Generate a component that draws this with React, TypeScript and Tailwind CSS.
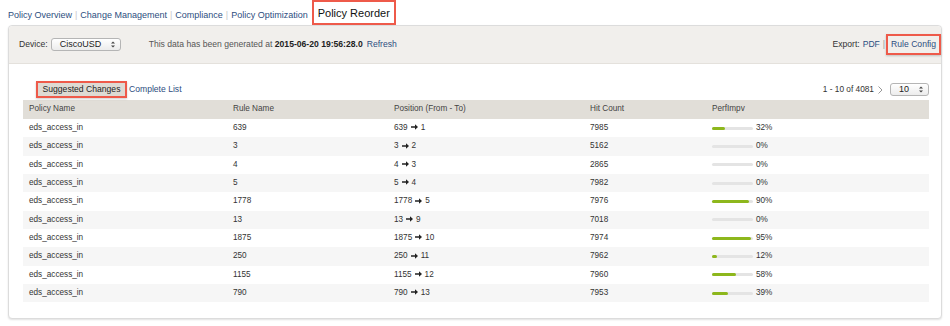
const rows = [
  { rule: "639", from: "639", to: "1", hits: "7985", perf: 32 },
  { rule: "3", from: "3", to: "2", hits: "5162", perf: 0 },
  { rule: "4", from: "4", to: "3", hits: "2865", perf: 0 },
  { rule: "5", from: "5", to: "4", hits: "7982", perf: 0 },
  { rule: "1778", from: "1778", to: "5", hits: "7976", perf: 90 },
  { rule: "13", from: "13", to: "9", hits: "7018", perf: 0 },
  { rule: "1875", from: "1875", to: "10", hits: "7974", perf: 95 },
  { rule: "250", from: "250", to: "11", hits: "7962", perf: 12 },
  { rule: "1155", from: "1155", to: "12", hits: "7960", perf: 58 },
  { rule: "790", from: "790", to: "13", hits: "7953", perf: 39 },
];

const navItems = ["Policy Overview", "Change Management", "Compliance", "Policy Optimization"];

function Updown() {
  return (
    <svg width="4" height="7" viewBox="0 0 4 7" className="shrink-0">
      <path d="M0 2.5 L2 0.5 L4 2.5 Z M0 4.5 L2 6.5 L4 4.5 Z" fill="#444" />
    </svg>
  );
}

function SelectBox({ label, className }: { label: string; className: string }) {
  return (
    <div
      className={`flex items-center justify-between rounded-[3px] border border-[#b5b5b5] bg-gradient-to-b from-white to-[#ececec] pl-[8px] pr-[5px] text-[9px] text-[#222] ${className}`}
    >
      <span>{label}</span>
      <Updown />
    </div>
  );
}

function Arrow() {
  return (
    <svg width="7" height="6" viewBox="0 0 7 6" className="mx-[3px] mb-[2px] shrink-0">
      <path d="M0 2.3 H4 V0.3 L7 3 L4 5.7 V3.7 H0 Z" fill="#222" />
    </svg>
  );
}

export default function App() {
  return (
    <div className="h-[326px] w-[950px] bg-white font-['Liberation_Sans',Arial,sans-serif] text-[#333]">
      {/* top tabs */}
      <div className="flex h-[25px] items-end pl-[8px]">
        <div className="flex items-center pb-[3px] text-[9px] text-[#2d4e80]">
          {navItems.map((item, i) => (
            <span key={item} className="flex items-center">
              <span>{item}</span>
              {i < navItems.length - 1 && <span className="mx-[3px] text-[#c8c8c8]">|</span>}
            </span>
          ))}
        </div>
        <div className="ml-[4px] flex h-[25px] items-center border-2 border-[#ee5a4a] px-[4px] pt-[1px] text-[11px] text-[#111]">
          Policy Reorder
        </div>
      </div>

      {/* panel */}
      <div className="mx-[8px] h-[294px] rounded-[4px] border border-[#dcdcdc] bg-white shadow-[0_1px_2px_rgba(0,0,0,0.12)]">
        <div className="flex h-[38px] items-center justify-between rounded-t-[4px] border-b border-[#e4e1dc] bg-[#f1efec] pl-[10px] text-[8.6px]">
          <div className="flex items-center">
            <span className="text-[#333]">Device:</span>
            <SelectBox label="CiscoUSD" className="ml-[3px] h-[13px] w-[70px]" />
            <span className="ml-[28px] text-[#555]">
              This data has been generated at{" "}
              <span className="font-bold text-[#222]">2015-06-20 19:56:28.0</span>
              <span className="ml-[4px] text-[#2d4e80]">Refresh</span>
            </span>
          </div>
          <div className="flex items-center">
            <span className="text-[#333]">Export:</span>
            <span className="ml-[3px] text-[#2d4e80]">PDF</span>
            <span className="ml-[3px] text-[#999]">|</span>
            <div className="ml-[1px] flex h-[21px] items-center border-2 border-[#ee5a4a] px-[3px] text-[#2d4e80] shadow-[0_1px_2px_rgba(0,0,0,0.2)]">
              Rule Config
            </div>
          </div>
        </div>

        <div className="px-[14px] pt-[17px] pr-[12px]">
          {/* tabs + pagination */}
          <div className="flex h-[17px] items-center justify-between">
            <div className="ml-[13px] flex items-center text-[8.6px]">
              <div className="flex h-[17px] w-[91px] items-center justify-center border-2 border-[#ee5a4a] bg-[#dedad3] text-[#222] shadow-[0_1px_2px_rgba(0,0,0,0.2)]">
                Suggested Changes
              </div>
              <span className="ml-[2px] text-[#2d4e80]">Complete List</span>
            </div>
            <div className="flex items-center text-[8.3px] text-[#333]">
              <span>1 - 10 of 4081</span>
              <svg width="5" height="8" viewBox="0 0 5 8" className="ml-[4px]">
                <path d="M0.5 0.5 L4 4 L0.5 7.5" fill="none" stroke="#999" strokeWidth="1" />
              </svg>
              <SelectBox label="10" className="ml-[7px] h-[13px] w-[39px]" />
            </div>
          </div>

          {/* table */}
          <div className="mt-[2px] text-[8.2px]">
            <div className="flex h-[19px] items-center bg-[#e1ded8] text-[#444]">
              <div className="w-[204px] pl-[6px]">Policy Name</div>
              <div className="w-[161px] pl-[6px]">Rule Name</div>
              <div className="w-[196px] pl-[6px]">Position (From - To)</div>
              <div className="w-[122px] pl-[6px]">Hit Count</div>
              <div className="flex-1 pl-[6px]">PerfImpv</div>
            </div>
            {rows.map((r, i) => (
              <div
                key={i}
                className={`flex h-[18.35px] items-center text-[#333] ${i % 2 === 1 ? "bg-[#f6f6f6]" : "bg-white"}`}
              >
                <div className="w-[204px] pl-[6px]">eds_access_in</div>
                <div className="w-[161px] pl-[6px]">{r.rule}</div>
                <div className="flex w-[196px] items-center pl-[6px]">
                  <span>{r.from}</span>
                  <Arrow />
                  <span>{r.to}</span>
                </div>
                <div className="w-[122px] pl-[6px]">{r.hits}</div>
                <div className="flex flex-1 items-center pl-[6px]">
                  <div className="h-[3px] w-[41px] rounded-[2px] bg-[#e4e4e4]">
                    <div className="h-[3px] rounded-[2px] bg-[#8db71c]" style={{ width: `${r.perf}%` }} />
                  </div>
                  <span className="ml-[3px]">{r.perf}%</span>
                </div>
              </div>
            ))}
          </div>
        </div>
      </div>
    </div>
  );
}
